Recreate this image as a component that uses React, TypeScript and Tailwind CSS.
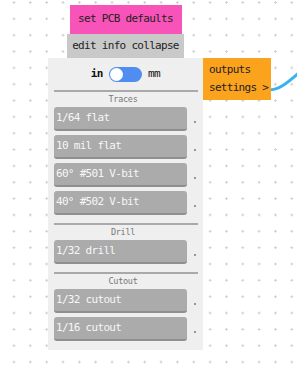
import React from "react";

const mono = "font-['DejaVu_Sans_Mono','Liberation_Mono',monospace]";

// one preset button with its little output dot
const Preset: React.FC<{ label: string }> = ({ label }) => (
  <div className="flex items-center">
    <div className="w-[133px] h-[24px] bg-[#ababab] border-b-2 border-[#8f8f8f] rounded-[3px] flex items-center pl-[2px] text-[#f7f7f7] text-[11px] tracking-[-0.7px]">
      {label}
    </div>
    <div className="ml-[7px] mt-[6px] w-[2px] h-[2px] rounded-full bg-[#777]" />
  </div>
);

const Section: React.FC<{ title: string; items: string[] }> = ({ title, items }) => (
  <div className="flex flex-col">
    <div className="w-[144px] h-[2px] bg-[#a9a9a9]" />
    <div className="h-[15px] flex items-center justify-center pr-[11px] text-[8.5px] text-[#777] tracking-[-0.3px]">
      {title}
    </div>
    <div className="flex flex-col gap-[4px]">
      {items.map((it) => (
        <Preset key={it} label={it} />
      ))}
    </div>
  </div>
);

export default function App() {
  const sections = [
    { title: "Traces", items: ["1/64 flat", "10 mil flat", "60° #501 V-bit", "40° #502 V-bit"] },
    { title: "Drill", items: ["1/32 drill"] },
    { title: "Cutout", items: ["1/32 cutout", "1/16 cutout"] },
  ];

  return (
    <div
      className={`relative w-[297px] h-[374px] overflow-hidden bg-white ${mono} bg-[radial-gradient(circle,#cfcfcf_1px,transparent_1.3px)] bg-[size:16.35px_16.35px] bg-[position:5.8px_-5.7px]`}
    >
      {/* connection wire */}
      <svg className="absolute left-0 top-0" width="297" height="374">
        <path d="M269 90 C280 90 288 82 300 72" fill="none" stroke="#37b3ee" strokeWidth="3" />
      </svg>

      {/* PCB node */}
      <div className="absolute left-[48px] top-[5px] w-[155px] flex flex-col items-center">
        <div className="w-[112px] h-[29px] bg-[#f853b8] flex items-center justify-center text-[11px] tracking-[-0.7px] text-[#222]">
          set PCB defaults
        </div>
        <div className="w-[117px] h-[24px] bg-[#c9c9c9] flex items-center justify-center text-[11px] tracking-[-0.7px] text-[#222]">
          edit info collapse
        </div>
        <div className="w-[155px] bg-[#efefef] pl-[6px] pb-[9px] flex flex-col">
          <div className="h-[32px] flex items-center justify-center pr-[6px] text-[11px] font-bold text-[#111] tracking-[-0.5px]">
            <span>in</span>
            <div className="mx-[6px] w-[33px] h-[15px] rounded-full bg-[#4f8ef0] flex items-center pl-[1px]">
              <div className="w-[13px] h-[13px] rounded-full bg-white" />
            </div>
            <span className="font-normal">mm</span>
          </div>
          <div className="flex flex-col gap-[8px]">
            {sections.map((s) => (
              <Section key={s.title} title={s.title} items={s.items} />
            ))}
          </div>
        </div>
      </div>

      {/* outputs node */}
      <div className="absolute left-[203px] top-[58px] w-[68px] h-[42px] bg-[#fca31e] flex flex-col justify-center pl-[6px] gap-[4px] text-[11px] tracking-[-0.7px] text-[#222] leading-[14px]">
        <span>outputs</span>
        <span>settings &gt;</span>
      </div>
    </div>
  );
}
